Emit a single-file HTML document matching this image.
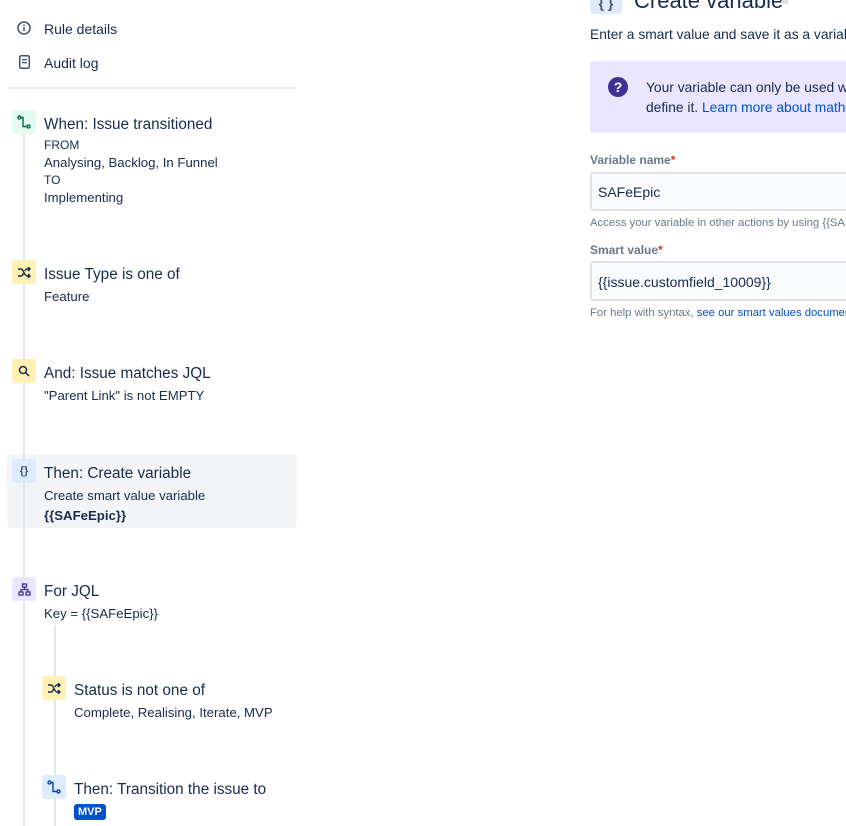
<!DOCTYPE html>
<html><head><meta charset="utf-8"><style>
*{margin:0;padding:0;box-sizing:border-box}
body{width:846px;height:826px;overflow:hidden;background:#fff;font-family:"Liberation Sans",sans-serif;color:#172b4d;position:relative}
.a{position:absolute;white-space:nowrap}
.t{font-size:15.3px;color:#172b4d}
.s{font-size:13.2px;color:#172b4d}
.ic{position:absolute;width:24px;height:24px;border-radius:3px;display:flex;align-items:center;justify-content:center}
.nav{font-size:14px;color:#172b4d}
</style></head><body>
<svg class="a" style="left:17px;top:21px" width="14" height="14" viewBox="0 0 14 14"><circle cx="7" cy="7" r="6" fill="none" stroke="#42526e" stroke-width="1.5"/><rect x="6.25" y="6" width="1.5" height="4" fill="#42526e"/><rect x="6.25" y="3.5" width="1.5" height="1.5" fill="#42526e"/></svg>
<div class="a nav" style="left:44px;top:21px">Rule details</div>
<svg class="a" style="left:19px;top:55px" width="11" height="14" viewBox="0 0 11 14"><rect x="0.75" y="0.75" width="9.5" height="12.5" rx="1.5" fill="none" stroke="#42526e" stroke-width="1.5"/><rect x="3" y="4" width="5" height="1.3" fill="#42526e"/><rect x="3" y="7" width="5" height="1.3" fill="#42526e"/></svg>
<div class="a nav" style="left:44px;top:55px">Audit log</div>
<div class="a" style="left:7px;top:87px;width:290px;height:2px;background:#ebecf0"></div>

<div class="a" style="left:23px;top:134px;width:2px;height:692px;background:#e4e5ea"></div>
<div class="a" style="left:54px;top:625px;width:2px;height:201px;background:#e4e5ea"></div>

<div class="ic" style="left:12px;top:110px;background:#e3fcef"><svg width="14" height="14" viewBox="0 0 14 14" fill="none" stroke="#006644" stroke-width="1.4"><circle cx="2.5" cy="2.5" r="1.5"/><circle cx="11.5" cy="11.5" r="1.5"/><path d="M4 2.5H6V11.5H10"/></svg></div>
<div class="a t" style="left:44px;top:116px">When: Issue transitioned</div>
<div class="a" style="left:44px;top:138px;font-size:12px">FROM</div>
<div class="a s" style="left:44px;top:155px">Analysing, Backlog, In Funnel</div>
<div class="a" style="left:44px;top:173px;font-size:12px">TO</div>
<div class="a s" style="left:44px;top:190px">Implementing</div>

<div class="ic" style="left:12px;top:260px;background:#fff0b3"><svg width="13" height="11" viewBox="0 0 13 11" fill="none" stroke="#172b4d" stroke-width="1.4"><path d="M0 2H3C6 2 6 9 9 9H12M0 9H3C4.5 9 5 7.5 5.5 6M7 4C7.5 2.8 8 2 9 2H12M10 0L12 2L10 4M10 7L12 9L10 11"/></svg></div>
<div class="a t" style="left:44px;top:266px">Issue Type is one of</div>
<div class="a s" style="left:44px;top:289px">Feature</div>

<div class="ic" style="left:12px;top:359px;background:#fff0b3"><svg width="12" height="12" viewBox="0 0 12 12" fill="none" stroke="#172b4d" stroke-width="1.5"><circle cx="5" cy="5" r="3.5"/><path d="M7.5 7.5L11 11"/></svg></div>
<div class="a t" style="left:44px;top:365px">And: Issue matches JQL</div>
<div class="a s" style="left:44px;top:388px">"Parent Link" is not EMPTY</div>

<div class="a" style="left:7px;top:454px;width:290px;height:74px;background:#f4f5f7;border-radius:4px"></div>
<div class="a" style="left:23px;top:454px;width:2px;height:74px;background:#e4e5ea"></div>
<div class="ic" style="left:12px;top:459px;background:#deebff;font-size:11px;font-weight:bold;color:#42526e">{}</div>
<div class="a t" style="left:44px;top:465px">Then: Create variable</div>
<div class="a s" style="left:44px;top:488px">Create smart value variable</div>
<div class="a s" style="left:44px;top:508px;font-weight:bold">{{SAFeEpic}}</div>

<div class="ic" style="left:12px;top:577px;background:#eae6ff"><svg width="13" height="13" viewBox="0 0 13 13" fill="none" stroke="#403294" stroke-width="1.3"><rect x="4.5" y="1" width="4" height="3"/><rect x="1" y="9" width="4" height="3"/><rect x="8" y="9" width="4" height="3"/><path d="M6.5 4V6.5M3 9V6.5H10V9"/></svg></div>
<div class="a t" style="left:44px;top:583px">For JQL</div>
<div class="a s" style="left:44px;top:606px">Key = {{SAFeEpic}}</div>

<div class="ic" style="left:42px;top:676px;background:#fff0b3"><svg width="13" height="11" viewBox="0 0 13 11" fill="none" stroke="#172b4d" stroke-width="1.4"><path d="M0 2H3C6 2 6 9 9 9H12M0 9H3C4.5 9 5 7.5 5.5 6M7 4C7.5 2.8 8 2 9 2H12M10 0L12 2L10 4M10 7L12 9L10 11"/></svg></div>
<div class="a t" style="left:74px;top:682px">Status is not one of</div>
<div class="a s" style="left:74px;top:705px">Complete, Realising, Iterate, MVP</div>

<div class="ic" style="left:42px;top:775px;background:#deebff"><svg width="14" height="14" viewBox="0 0 14 14" fill="none" stroke="#0747a6" stroke-width="1.4"><circle cx="2.5" cy="2.5" r="1.5"/><circle cx="11.5" cy="11.5" r="1.5"/><path d="M4 2.5H6V11.5H10"/></svg></div>
<div class="a t" style="left:74px;top:781px">Then: Transition the issue to</div>
<div class="a" style="left:74px;top:804px;background:#0052cc;color:#fff;font-size:11px;font-weight:bold;padding:1px 4px;border-radius:3px;line-height:14px">MVP</div>

<div class="a" style="left:590px;top:-18px;width:32px;height:32px;background:#deebff;border-radius:4px;color:#42526e;font-weight:bold;font-size:14px;text-align:center;line-height:42px">{ }</div>
<div class="a" style="left:634px;top:-12px;font-size:22px;color:#172b4d">Create variable</div>
<div class="a" style="left:781px;top:0px;width:8px;height:4px;background:#dfe1e6;border-radius:2px"></div>
<div class="a" style="left:590px;top:27px;font-size:13.8px">Enter a smart value and save it as a variable</div>
<div class="a" style="left:590px;top:61px;width:270px;height:72px;background:#eae6ff;border-radius:3px"></div>
<div class="a" style="left:608px;top:77px;width:20px;height:20px;border-radius:50%;background:#403294;color:#fff;font-size:14px;font-weight:bold;text-align:center;line-height:20px">?</div>
<div class="a" style="left:646px;top:78px;font-size:13.8px;line-height:20px">Your variable can only be used within<br>define it. <span style="color:#0052cc">Learn more about math</span></div>
<div class="a" style="left:590px;top:153px;font-size:12px;font-weight:bold;color:#6b778c">Variable name<span style="color:#de350b">*</span></div>
<div class="a" style="left:590px;top:172px;width:270px;height:39px;background:#fafbfc;border:2px solid #dfe1e6;border-radius:3px"></div>
<div class="a" style="left:598px;top:184px;font-size:14px">SAFeEpic</div>
<div class="a" style="left:590px;top:217px;font-size:11.3px;color:#6b778c">Access your variable in other actions by using {{SAFeEpic}}</div>
<div class="a" style="left:590px;top:243px;font-size:12px;font-weight:bold;color:#6b778c">Smart value<span style="color:#de350b">*</span></div>
<div class="a" style="left:590px;top:261px;width:270px;height:40px;background:#fafbfc;border:2px solid #dfe1e6;border-radius:3px"></div>
<div class="a" style="left:598px;top:274px;font-size:14px">{{issue.customfield_10009}}</div>
<div class="a" style="left:590px;top:307px;font-size:11.3px;color:#6b778c">For help with syntax, <span style="color:#0052cc">see our smart values documentation</span></div>
</body></html>
